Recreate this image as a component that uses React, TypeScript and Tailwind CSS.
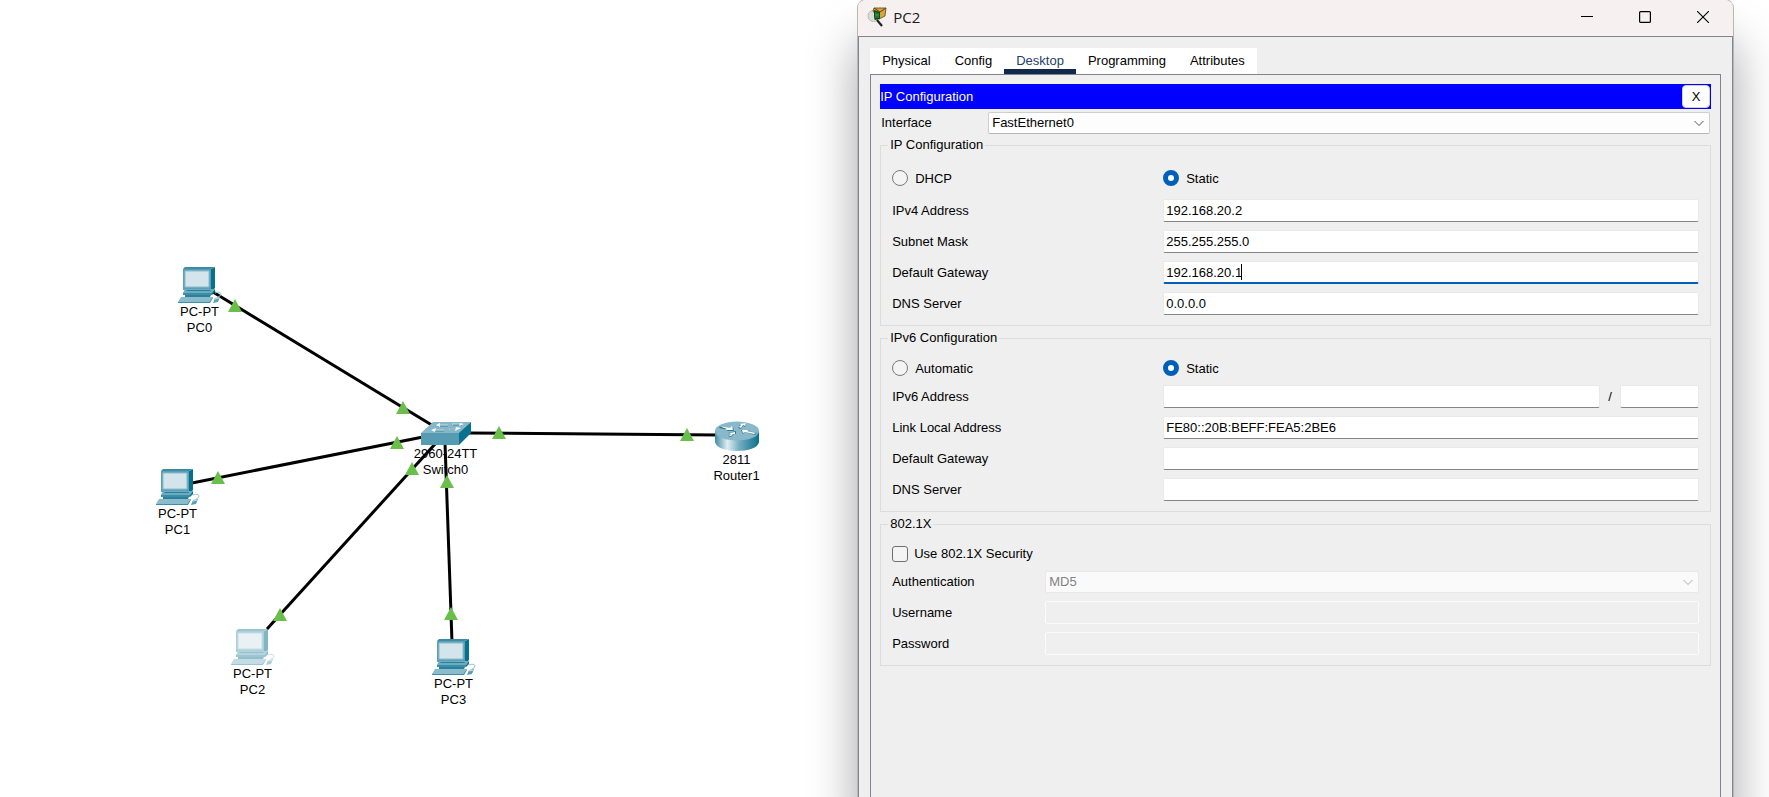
import { useState, type ReactNode } from "react";

type Device = {
  kind: "pc" | "switch" | "router";
  model: string;
  name: string;
  place: string;
  labelPlace: string;
  faded?: boolean;
};

const devices: Device[] = [
  { kind: "pc", model: "PC-PT", name: "PC0", place: "left-[177px] top-[266px]", labelPlace: "left-[150px] top-[304px]" },
  { kind: "pc", model: "PC-PT", name: "PC1", place: "left-[155px] top-[468px]", labelPlace: "left-[128px] top-[506px]" },
  { kind: "pc", model: "PC-PT", name: "PC2", place: "left-[230px] top-[628px]", labelPlace: "left-[203px] top-[666px]", faded: true },
  { kind: "pc", model: "PC-PT", name: "PC3", place: "left-[431px] top-[638px]", labelPlace: "left-[404px] top-[676px]" },
  { kind: "switch", model: "2960-24TT", name: "Switch0", place: "left-[421px] top-[422px]", labelPlace: "left-[396px] top-[446px]" },
  { kind: "router", model: "2811", name: "Router1", place: "left-[715px] top-[421px]", labelPlace: "left-[687px] top-[452px]" },
];

const links = [
  [213, 292, 435, 427],
  [192, 483, 423, 437],
  [267, 629, 436, 443],
  [452, 642, 445, 443],
  [468, 433, 718, 435],
];

const lights = [
  [235, 306], [403, 408], [397, 443], [218, 478], [412, 469],
  [280, 615], [447, 482], [451, 614], [499, 433], [687, 435],
];

function PcIcon() {
  return (
    <svg width="46" height="38" viewBox="0 0 46 38" aria-hidden="true">
      <path d="M34 3 38 1V22L34 26Z" fill="#07708d" />
      <path d="M6 3 8 1H38L34 3Z" fill="#3a8ba5" />
      <path d="M6 3H34V24H6Z" fill="#5ba0b7" />
      <path d="M8 5H32V21H8Z" fill="#d4e4eb" stroke="#8cbccb" />
      <path d="M8 23H38L35 27H6Z" fill="#6dabc0" />
      <path d="M10 24H34L33 25H9Z" fill="#2a7f9b" />
      <path d="M6 27H35V29H6Z" fill="#3d8da7" />
      <path d="M35 27 38 23V26L35 29Z" fill="#07708d" />
      <path d="M8 29H34L33 31H8Z" fill="#2a7f9b" />
      <path d="M4 31H36L32 36H1Z" fill="#8bbccc" />
      <path d="M1 36H32L36 31V32L33 37H1Z" fill="#3f8da7" />
      <path d="M38 27Q43 25 44 28 44 30 41 31" fill="none" stroke="#9cc6d3" />
      <path d="M38 32 43 31 41 36 36 37Z" fill="#5a9fb6" />
      <path d="M38 33 42 32" stroke="#cfe2ea" />
    </svg>
  );
}

function SwitchIcon() {
  return (
    <svg width="50" height="24" viewBox="0 0 50 24" aria-hidden="true">
      <path d="M0 11 12 0H50L38 12Z" fill="#86b6c7" />
      <path d="M0 11H38V23H0Z" fill="#559bb2" />
      <path d="M38 11 50 0V11L38 23Z" fill="#07718e" />
      <path d="M17 4H27M32 3H41M13 9H23M29 7H37" stroke="#3b849b" strokeWidth="1" />
      <path d="M15 3 19 1V5ZM43 2 39 1 38 4ZM10 8 15 6 14 10ZM40 6 35 5 34 9Z" fill="#fff" />
      <path d="M18 3H27M31 2H40M13 8H23M28 7H36" stroke="#d6e8ee" strokeWidth="0.8" />
    </svg>
  );
}

function RouterIcon() {
  return (
    <svg width="44" height="31" viewBox="0 0 44 31" aria-hidden="true">
      <defs>
        <linearGradient id="router-side" x1="0" x2="1">
          <stop offset="0" stopColor="#3e8ca5" />
          <stop offset="0.28" stopColor="#e1edf1" />
          <stop offset="0.55" stopColor="#75aec0" />
          <stop offset="1" stopColor="#0b718d" />
        </linearGradient>
      </defs>
      <path d="M0 10V21C1 27 11 30 22 30S43 27 44 21V10Z" fill="url(#router-side)" />
      <ellipse cx="22" cy="10" rx="22" ry="9.5" fill="#89b8ca" />
      <path d="M5 5 16 8 18 6 19 10 11 10 13 9 4 7Z" fill="#2f7a93" />
      <path d="M4 5 15 7 17 5 18 9 10 9 12 8Z" fill="#fff" />
      <path d="M23 7 25 5 24 4 31 2 30 6 28 5 26 8Z" fill="#2f7a93" />
      <path d="M24 6 26 4 25 3 31 2 30 5 28 4 26 7Z" fill="#fff" />
      <path d="M26 9 35 9 33 10 42 12 40 14 30 11 28 13Z" fill="#2f7a93" />
      <path d="M27 9 34 9 32 10 41 12 39 13 30 11 28 12Z" fill="#fff" />
      <path d="M13 12 21 10 21 13 19 13 16 16 13 15 16 13Z" fill="#2f7a93" />
      <path d="M14 12 20 11 20 13 18 13 16 15 14 15 16 13Z" fill="#fff" />
    </svg>
  );
}

function DeviceIcon({ kind }: { kind: Device["kind"] }) {
  if (kind === "pc") return <PcIcon />;
  if (kind === "switch") return <SwitchIcon />;
  return <RouterIcon />;
}

function Topology() {
  return (
    <main className="relative min-w-0 flex-1" aria-label="Network topology">
      <svg className="absolute inset-0 h-full w-full overflow-visible" aria-hidden="true">
        {links.map(([x1, y1, x2, y2]) => (
          <line key={`${x1}-${y1}`} x1={x1} y1={y1} x2={x2} y2={y2} stroke="#000" strokeWidth="3" />
        ))}
      </svg>
      {devices.map((d) => (
        <div key={d.name}>
          <div className={`absolute ${d.place} ${d.faded ? "opacity-50" : ""}`}>
            <DeviceIcon kind={d.kind} />
          </div>
          <div className={`absolute w-[99px] text-center leading-4 ${d.labelPlace}`}>
            {d.model}
            <br />
            {d.name}
          </div>
        </div>
      ))}
      <svg className="absolute inset-0 h-full w-full overflow-visible" aria-hidden="true">
        {lights.map(([x, y]) => (
          <path key={`${x}-${y}`} d={`M${x} ${y - 7}L${x + 7} ${y + 6}H${x - 7}Z`} fill="#6abf4b" />
        ))}
      </svg>
    </main>
  );
}

function AppIcon() {
  return (
    <svg width="20" height="20" viewBox="0 0 20 20" aria-hidden="true">
      <circle cx="6.500" cy="9" r="5.500" fill="#dcdcd8" stroke="#b9b9b5" />
      <path d="M7 1 19 1 18 9 12 12 6 4Z" fill="#d9a441" stroke="#5b4416" strokeWidth="0.8" />
      <path d="M7 1 13 5 19 1" fill="none" stroke="#5b4416" />
      <path d="M7 3 13 5V12L8 13Q7 12 7 9Z" fill="#14471c" />
      <path d="M9 5V11M11 6V11M8 8H12" stroke="#2fa83c" />
      <path d="M10 13 15 19" stroke="#222" strokeWidth="2.200" />
    </svg>
  );
}

function Chevron({ tone }: { tone: string }) {
  return (
    <svg className={`pointer-events-none absolute right-1.5 top-2 ${tone}`} width="10" height="7" viewBox="0 0 10 7" fill="none" stroke="currentColor" aria-hidden="true">
      <path d="M0.500 1 5 5.500 9.500 1" />
    </svg>
  );
}

const fieldClass =
  "block h-[23px] w-full min-w-0 rounded-[2px] border border-[#e9e9e9] border-b-[#858585] bg-white pl-0.5 outline-none";

function Row({ id, label, children }: { id: string; label: string; children: ReactNode }) {
  return (
    <div className="grid grid-cols-[271px_minmax(0,1fr)] items-center">
      <label htmlFor={id}>{label}</label>
      {children}
    </div>
  );
}

function Group({ title, children }: { title: string; children: ReactNode }) {
  return (
    <fieldset className="min-w-0 border border-[#dcdcdc] px-[11px] pb-2.5">
      <legend className="-ml-1 px-0.5 leading-4">{title}</legend>
      {children}
    </fieldset>
  );
}

function Radio({ name, label, checked, onPick }: { name: string; label: string; checked: boolean; onPick: () => void }) {
  return (
    <label className="flex h-6 items-center gap-[7px]">
      <input
        type="radio"
        name={name}
        checked={checked}
        onChange={onPick}
        className="size-4 appearance-none rounded-full border border-[#7a7a7a] bg-[#f4f4f4] checked:border-[5px] checked:border-[#005fb8] checked:bg-white"
      />
      <span className="pt-px">{label}</span>
    </label>
  );
}

function RadioPair({ name, first }: { name: string; first: string }) {
  const [value, setValue] = useState("Static");
  return (
    <div className="grid grid-cols-[271px_minmax(0,1fr)]">
      <Radio name={name} label={first} checked={value === first} onPick={() => setValue(first)} />
      <Radio name={name} label="Static" checked={value === "Static"} onPick={() => setValue("Static")} />
    </div>
  );
}

const tabs = ["Physical", "Config", "Desktop", "Programming", "Attributes"];

function DeviceWindow() {
  return (
    <section
      aria-label="PC2"
      className="relative mr-9 flex w-[calc(49%+8px)] shrink-0 flex-col rounded-t-lg bg-[#efefef] shadow-[0_0_0_1px_#b9b6b8,0_44px_48px_2px_rgba(0,0,0,0.34)]"
    >
      <header className="flex h-9 items-center rounded-t-lg bg-[#f7f0f0] pb-0.5 pl-[9px] pr-px">
        <AppIcon />
        <h1 className="ml-1.5 flex-1 font-['Open_Sans',sans-serif] text-[15px] leading-5 text-[#1b1b1b]">PC2</h1>
        <button aria-label="Minimize" className="flex h-8 w-[58px] items-center justify-center">
          <svg width="12" height="12" viewBox="0 0 12 12" stroke="#000"><path d="M0 5.500H12" /></svg>
        </button>
        <button aria-label="Maximize" className="flex h-8 w-[58px] items-center justify-center">
          <svg width="12" height="12" viewBox="0 0 12 12" fill="none" stroke="#000" strokeWidth="1.200"><rect x="0.600" y="0.600" width="10.800" height="10.800" rx="1" /></svg>
        </button>
        <button aria-label="Close" className="flex h-8 w-[58px] items-center justify-center">
          <svg width="12" height="12" viewBox="0 0 12 12" stroke="#000" strokeWidth="1.100"><path d="M0 0 12 12M12 0 0 12" /></svg>
        </button>
      </header>

      <div className="flex flex-1 flex-col border border-b-0 border-[#82838f] px-[11px] pt-[11px]">
        <nav className="flex self-start bg-white" role="tablist">
          {tabs.map((t) => (
            <button
              key={t}
              role="tab"
              aria-selected={t === "Desktop"}
              className={`h-[26px] border-b-[5px] px-3 pt-[5px] leading-4 ${
                t === "Desktop" ? "border-[#10284b] text-[#24406a]" : "border-white"
              }`}
            >
              {t}
            </button>
          ))}
        </nav>

        <div className="flex-1 border border-b-0 border-[#82838f] px-[9px] pt-[9px]">
          <div className="flex h-[25px] items-center justify-between bg-[#0000ff] pr-px text-white">
            <h2>IP Configuration</h2>
            <button aria-label="Close IP Configuration" className="h-[23px] w-7 rounded border border-[#d0d0d0] bg-[#fdfdfd] text-black">X</button>
          </div>

          <div className="mt-[3px] flex items-center">
            <label htmlFor="interface" className="w-[108px] pl-px">Interface</label>
            <div className="relative mr-px flex-1">
              <select id="interface" className="block h-[22px] w-full appearance-none rounded-[2px] border border-[#cfcfcf] border-b-[#b8b8b8] bg-[#fdfdfd] pl-[3px]">
                <option>FastEthernet0</option>
              </select>
              <Chevron tone="text-[#555]" />
            </div>
          </div>

          <div className="mt-[3px] flex flex-col gap-1">
            <Group title="IP Configuration">
              <div className="pb-[9px] pt-[13px]">
                <RadioPair name="ipv4-mode" first="DHCP" />
              </div>
              <div className="flex flex-col gap-2">
                <Row id="ipv4" label="IPv4 Address">
                  <input id="ipv4" className={fieldClass} defaultValue="192.168.20.2" />
                </Row>
                <Row id="mask" label="Subnet Mask">
                  <input id="mask" className={fieldClass} defaultValue="255.255.255.0" />
                </Row>
                <Row id="gateway" label="Default Gateway">
                  <div className="relative">
                    <input
                      id="gateway"
                      className="block h-[23px] w-full rounded-[2px] border border-b-2 border-[#e9e9e9] border-b-[#005fb8] bg-white pl-0.5 outline-none"
                      defaultValue="192.168.20.1"
                    />
                    <span className="absolute left-[78px] top-[3px] h-4 w-px bg-black" />
                  </div>
                </Row>
                <Row id="dns" label="DNS Server">
                  <input id="dns" className={fieldClass} defaultValue="0.0.0.0" />
                </Row>
              </div>
            </Group>

            <Group title="IPv6 Configuration">
              <div className="pb-[5px] pt-2.5">
                <RadioPair name="ipv6-mode" first="Automatic" />
              </div>
              <div className="flex flex-col gap-2">
                <Row id="ipv6" label="IPv6 Address">
                  <div className="flex items-center">
                    <input id="ipv6" className={fieldClass} />
                    <span className="w-5 shrink-0 text-center">/</span>
                    <div className="w-[79px] shrink-0">
                      <input id="prefix" aria-label="Prefix length" className={fieldClass} />
                    </div>
                  </div>
                </Row>
                <Row id="link-local" label="Link Local Address">
                  <input id="link-local" className={fieldClass} defaultValue="FE80::20B:BEFF:FEA5:2BE6" />
                </Row>
                <Row id="gateway6" label="Default Gateway">
                  <input id="gateway6" className={fieldClass} />
                </Row>
                <Row id="dns6" label="DNS Server">
                  <input id="dns6" className={fieldClass} />
                </Row>
              </div>
            </Group>

            <Group title="802.1X">
              <label className="mb-[5px] mt-2.5 flex h-6 items-center gap-1.5">
                <input type="checkbox" className="size-4 appearance-none rounded-[3px] border border-[#6f6f6f] bg-[#f4f4f4] checked:bg-[#005fb8]" />
                Use 802.1X Security
              </label>
              <div className="grid grid-cols-[153px_minmax(0,1fr)] items-center gap-y-2">
                <label htmlFor="auth">Authentication</label>
                <div className="relative">
                  <select id="auth" disabled className="block h-[22px] w-full appearance-none rounded-[2px] border border-[#e8e8e8] bg-[#fafafa] pl-[3px] text-[#838383] opacity-100">
                    <option>MD5</option>
                  </select>
                  <Chevron tone="text-[#adadad]" />
                </div>
                <label htmlFor="user">Username</label>
                <input id="user" disabled className="block h-[23px] w-full rounded-[2px] border border-[#fbfbfb] bg-[#efefef]" />
                <label htmlFor="password">Password</label>
                <input id="password" type="password" disabled className="block h-[23px] w-full rounded-[2px] border border-[#fbfbfb] bg-[#efefef]" />
              </div>
            </Group>
          </div>
        </div>
      </div>
    </section>
  );
}

export default function App() {
  return (
    <div className="flex min-h-screen overflow-hidden bg-white font-['Liberation_Sans',Arial,sans-serif] text-[13px] leading-4 text-black">
      <Topology />
      <DeviceWindow />
    </div>
  );
}
